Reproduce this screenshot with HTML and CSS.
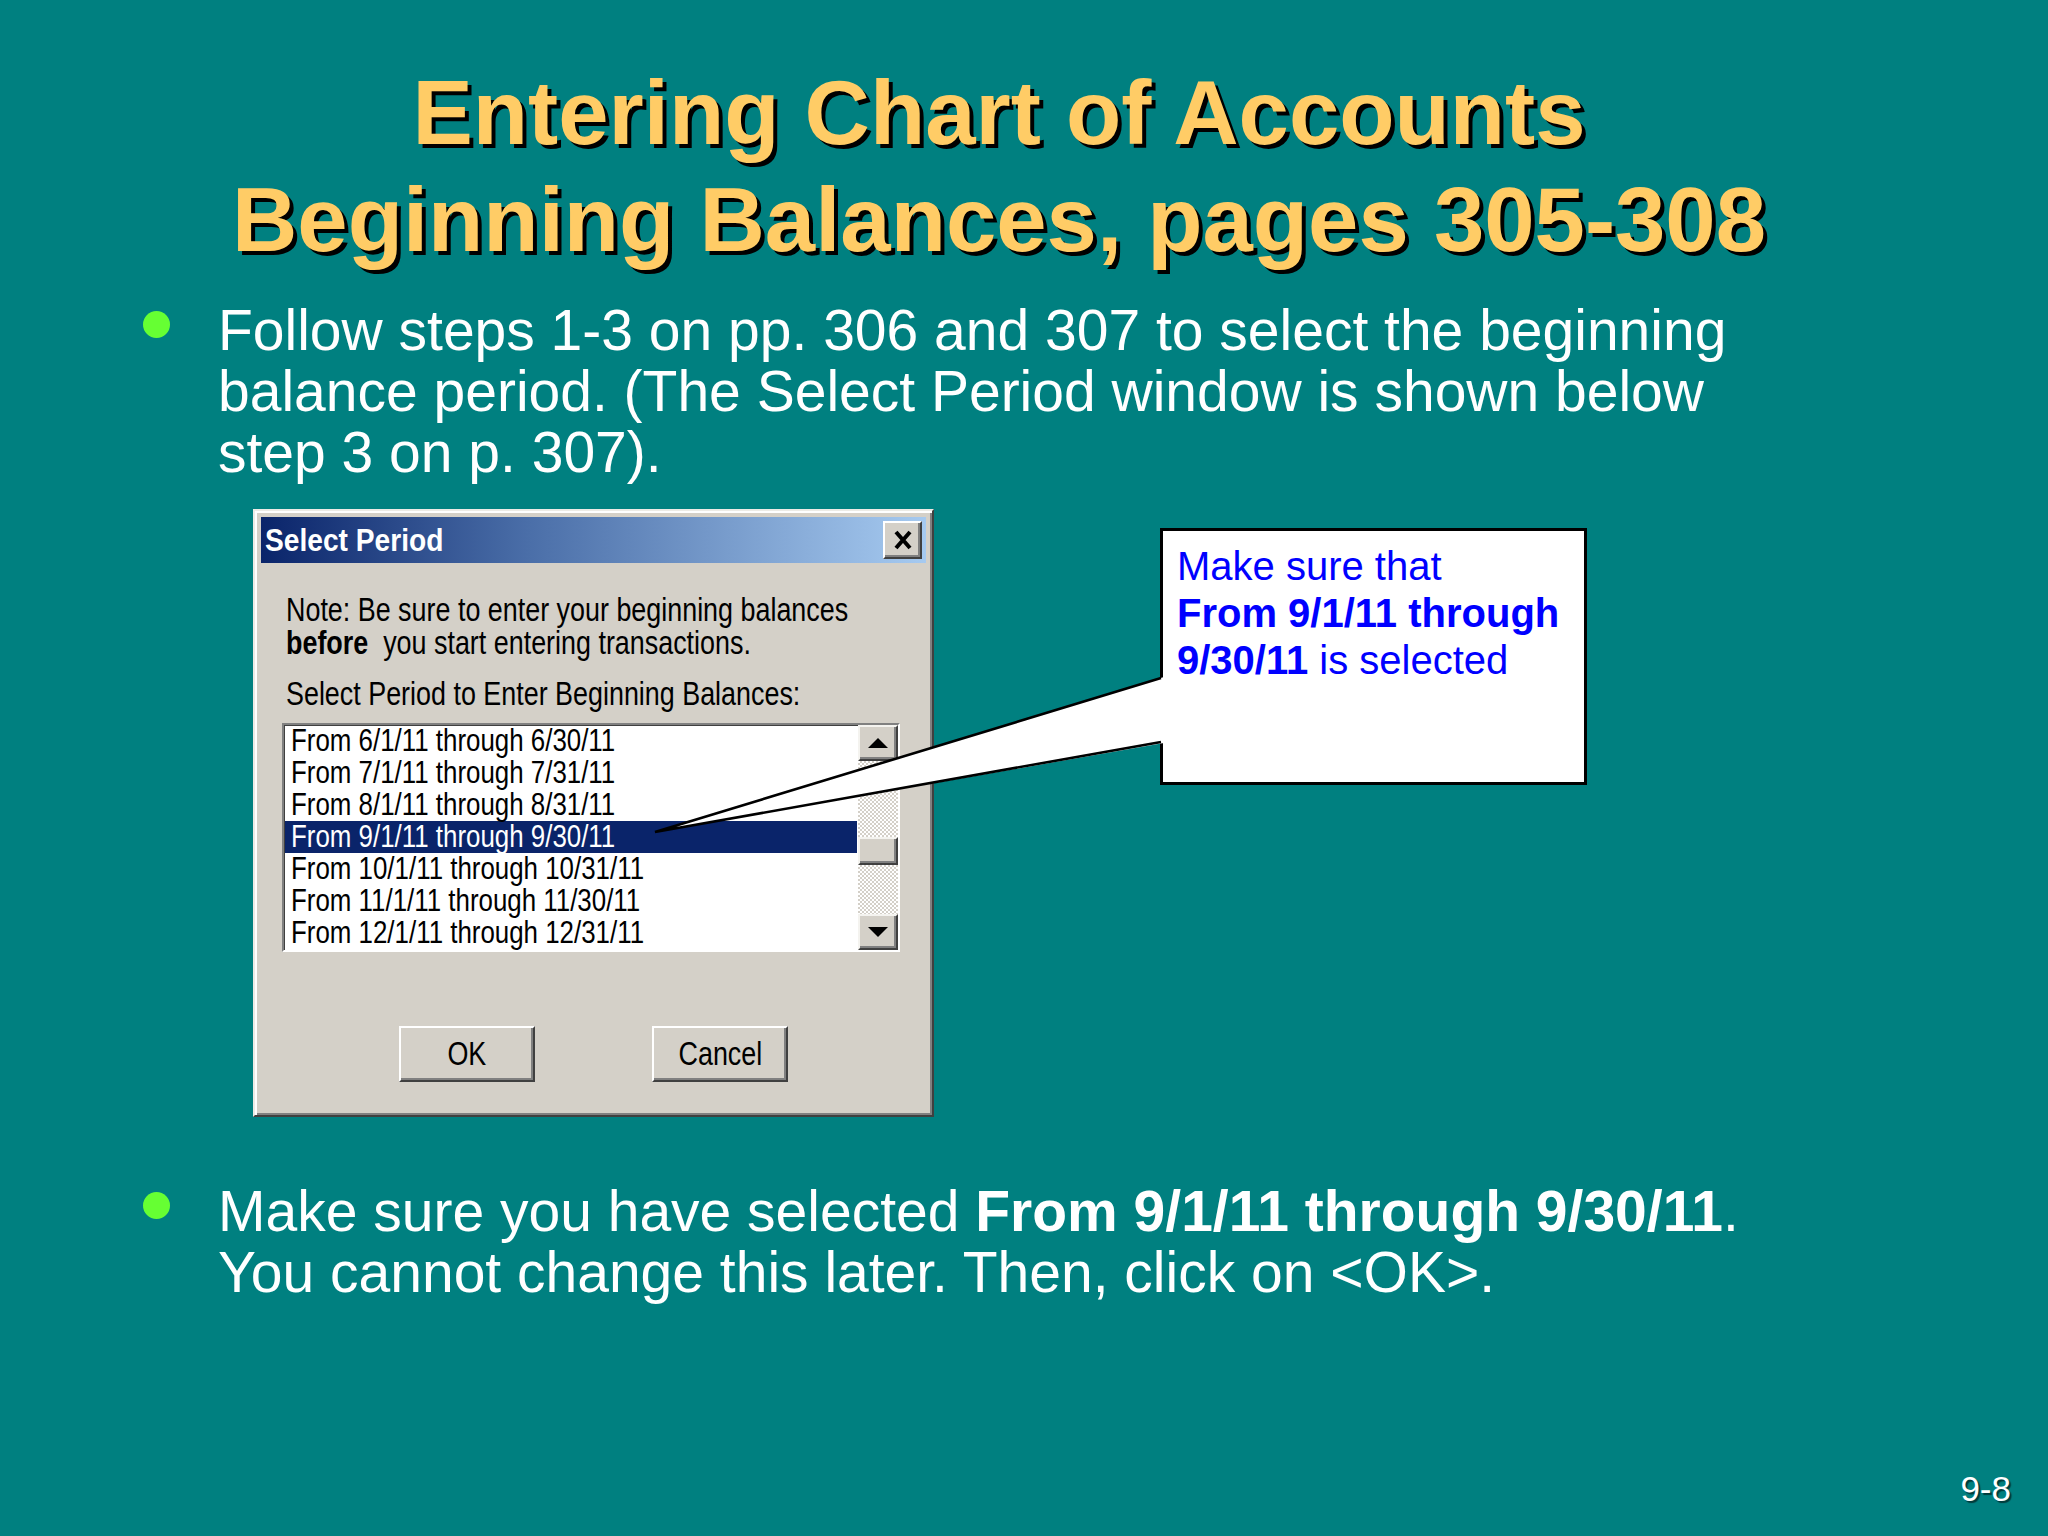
FILE: index.html
```html
<!DOCTYPE html>
<html lang="en">
<head>
<meta charset="utf-8">
<title>Entering Chart of Accounts Beginning Balances</title>
<link rel="stylesheet" href="styles.css">
</head>
<body>
<div class="slide">
  <h1 class="title">Entering Chart of Accounts<br>Beginning Balances, pages 305-308</h1>

  <div class="bullet bullet-first">
    <span class="dot"></span>
    <p>Follow steps 1-3 on pp. 306 and 307 to select the beginning<br>balance period. (The Select Period window is shown below<br>step 3 on p. 307).</p>
  </div>

  <div class="figure">
    <div class="dialog">
      <div class="titlebar">
        <span class="titlebar-text">Select Period</span>
        <span class="close">
          <svg width="18" height="20" viewBox="0 0 18 20"><path d="M2 2 L16 18 M16 2 L2 18" stroke="#000" stroke-width="4" fill="none"/></svg>
        </span>
      </div>
      <div class="note"><span class="sx">Note: Be sure to enter your beginning balances<br><b>before</b>&nbsp; you start entering transactions.</span></div>
      <div class="label"><span class="sx">Select Period to Enter Beginning Balances:</span></div>
      <div class="listbox">
        <div class="items">
          <div class="item"><span class="sx sx-list">From 6/1/11 through 6/30/11</span></div>
          <div class="item"><span class="sx sx-list">From 7/1/11 through 7/31/11</span></div>
          <div class="item"><span class="sx sx-list">From 8/1/11 through 8/31/11</span></div>
          <div class="item selected"><span class="sx sx-list">From 9/1/11 through 9/30/11</span></div>
          <div class="item"><span class="sx sx-list">From 10/1/11 through 10/31/11</span></div>
          <div class="item"><span class="sx sx-list">From 11/1/11 through 11/30/11</span></div>
          <div class="item"><span class="sx sx-list">From 12/1/11 through 12/31/11</span></div>
        </div>
        <div class="scrollbar">
          <div class="sb-btn"><svg width="20" height="10" viewBox="0 0 20 10"><polygon points="10,0 20,10 0,10" fill="#000"/></svg></div>
          <div class="sb-track sb-track-top"></div>
          <div class="sb-thumb"></div>
          <div class="sb-track sb-track-bottom"></div>
          <div class="sb-btn"><svg width="20" height="10" viewBox="0 0 20 10"><polygon points="0,0 20,0 10,10" fill="#000"/></svg></div>
        </div>
      </div>
      <div class="buttons">
        <div class="btn"><span class="sx sx-center">OK</span></div>
        <div class="btn"><span class="sx sx-center">Cancel</span></div>
      </div>
    </div>

    <div class="callout">Make sure that<br><b>From 9/1/11 through<br>9/30/11</b> is selected</div>
  </div>

  <div class="bullet bullet-second">
    <span class="dot"></span>
    <p>Make sure you have selected <b>From 9/1/11 through 9/30/11</b>.<br>You cannot change this later. Then, click on &lt;OK&gt;.</p>
  </div>

  <div class="pagenum">9-8</div>

  <svg class="pointer" width="2048" height="1536" viewBox="0 0 2048 1536">
    <polygon points="1164,677 655,832 1164,743" fill="#fff"/>
    <path d="M1161 678 L655 832 L1161 742" stroke="#000" stroke-width="2.6" fill="none" stroke-linejoin="miter"/>
  </svg>
</div>
</body>
</html>
```

FILE: styles.css
```css
* { box-sizing: border-box; }
html, body { margin: 0; padding: 0; }
body {
  background: #008080;
  width: 2048px;
  height: 1536px;
  overflow: hidden;
  font-family: "Liberation Sans", Arial, sans-serif;
}
.slide {
  position: relative;
  width: 2048px;
  height: 1536px;
  display: flex;
  flex-direction: column;
}
.title {
  margin: 59px 0 0;
  padding-right: 50px;
  text-align: center;
  color: #ffcc66;
  font-size: 90.5px;
  font-weight: bold;
  line-height: 107px;
  text-shadow: 4px 4px 0 #000;
  white-space: nowrap;
}
.bullet {
  display: flex;
  align-items: flex-start;
  padding-left: 143px;
  color: #fff;
  font-size: 57px;
  line-height: 61px;
}
.bullet p { margin: 0; white-space: nowrap; }
.bullet-first { margin-top: 27px; }
.bullet-second { margin-top: 64px; }
.dot {
  flex: none;
  width: 27px;
  height: 27px;
  border-radius: 50%;
  background: #66ff33;
  margin-top: 11px;
  margin-right: 48px;
}
.figure {
  display: flex;
  align-items: flex-start;
  margin-top: 26px;
  padding-left: 253px;
}
/* dialog */
.dialog {
  flex: none;
  width: 681px;
  height: 608px;
  background: #d4d0c8;
  border: 2px solid;
  border-color: #ecebe6 #404040 #404040 #ecebe6;
  box-shadow: inset 2px 2px 0 #fff, inset -2px -2px 0 #808080;
  padding: 6px;
  display: flex;
  flex-direction: column;
  font-family: "Liberation Sans", Arial, sans-serif;
  color: #000;
}
.sx {
  display: inline-block;
  white-space: nowrap;
  transform: scaleX(0.815);
  transform-origin: 0 0;
}
.sx-list { transform: scaleX(0.835); }
.sx-center { transform-origin: 50% 50%; }
.titlebar {
  flex: none;
  height: 46px;
  display: flex;
  align-items: center;
  justify-content: space-between;
  padding: 0 4px;
  background: linear-gradient(to right, #0a246a 0%, #4a6ea8 40%, #a6caf0 100%);
}
.titlebar-text {
  display: inline-block;
  color: #fff;
  font-weight: bold;
  font-size: 32px;
  line-height: 40px;
  white-space: nowrap;
  transform: scaleX(0.88);
  transform-origin: 0 50%;
}
.close {
  width: 39px;
  height: 38px;
  background: #d4d0c8;
  border: 2px solid;
  border-color: #fff #404040 #404040 #fff;
  box-shadow: inset -2px -2px 0 #808080;
  display: flex;
  align-items: center;
  justify-content: center;
}
.note {
  margin: 30px 0 0 25px;
  font-size: 33px;
  line-height: 33px;
}
.label {
  margin: 18px 0 0 25px;
  font-size: 33px;
  line-height: 33px;
}
.listbox {
  flex: none;
  margin: 13px 0 0 21px;
  width: 618px;
  height: 229px;
  background: #fff;
  border: 2px solid;
  border-color: #808080 #fff #fff #808080;
  box-shadow: inset 1px 1px 0 #404040;
  display: flex;
}
.items { flex: 1; padding: 0 1px; }
.item {
  height: 32px;
  line-height: 32px;
  padding-left: 6px;
  font-size: 31px;
  white-space: nowrap;
}
.item.selected { background: #0a246a; color: #fff; }
.scrollbar {
  flex: none;
  width: 40px;
  display: flex;
  flex-direction: column;
}
.sb-btn, .sb-thumb {
  flex: none;
  background: #d4d0c8;
  border: 2px solid;
  border-color: #f4f3ef #404040 #404040 #f4f3ef;
  box-shadow: inset -2px -2px 0 #808080;
  display: flex;
  align-items: center;
  justify-content: center;
}
.sb-btn { height: 36px; }
.sb-thumb { height: 28px; }
.sb-track {
  background: repeating-conic-gradient(#d4d0c8 0 25%, #ffffff 0 50%) 0 0 / 4px 4px;
}
.sb-track-top { flex: none; height: 76px; }
.sb-track-bottom { flex: 1; }
.buttons {
  display: flex;
  justify-content: center;
  gap: 117px;
  margin-top: 74px;
}
.btn {
  width: 136px;
  height: 56px;
  border: 2px solid;
  border-color: #fff #404040 #404040 #fff;
  box-shadow: inset -2px -2px 0 #808080;
  background: #d4d0c8;
  display: flex;
  align-items: center;
  justify-content: center;
  font-size: 33px;
}
/* callout */
.callout {
  flex: none;
  margin: 19px 0 0 226px;
  width: 427px;
  height: 257px;
  background: #fff;
  border: 3px solid #000;
  padding: 12px 0 0 14px;
  color: #0000ff;
  font-size: 40px;
  line-height: 47px;
  white-space: nowrap;
}
.pagenum {
  align-self: flex-end;
  margin: auto 37px 27px 0;
  color: #fff;
  font-size: 35px;
  line-height: 40px;
  text-shadow: 2px 2px 1px rgba(0,0,0,0.55);
}
.pointer {
  position: absolute;
  left: 0;
  top: 0;
  pointer-events: none;
}
```
